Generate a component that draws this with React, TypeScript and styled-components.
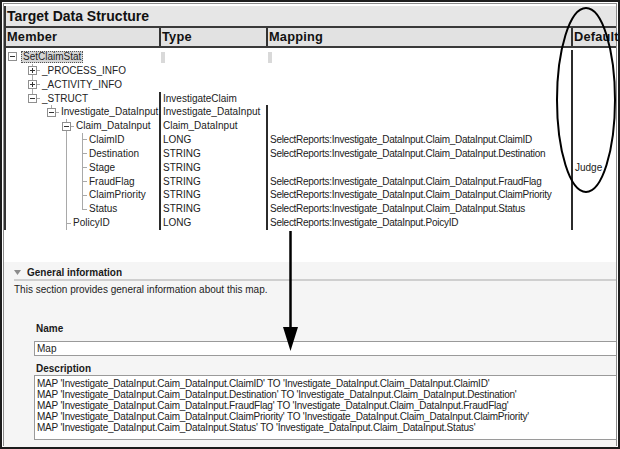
import * as React from "react";
import styled, { createGlobalStyle, css } from "styled-components";

const LINE = "#a9a9a9";
const SLOT = [20, 19, 15, 16, 16];

type TreeRow = {
  label: string;
  level: number;
  kind: "open" | "closed" | "leaf";
  vert: "none" | "full" | "top";
  guides?: number[];
  selected?: boolean;
  type?: string;
  map?: string;
  def?: string;
  mapLine?: boolean;
  stub?: boolean;
};

const MAP_PREFIX = "SelectReports:Investigate_DataInput.Claim_DataInput.";

const rows: TreeRow[] = [
  { label: "SetClaimStat", level: 0, kind: "open", vert: "none", selected: true, stub: true },
  { label: "_PROCESS_INFO", level: 1, kind: "closed", vert: "full" },
  { label: "_ACTIVITY_INFO", level: 1, kind: "closed", vert: "full" },
  { label: "_STRUCT", level: 1, kind: "open", vert: "top", type: "InvestigateClaim" },
  { label: "Investigate_DataInput", level: 2, kind: "open", vert: "top", type: "Investigate_DataInput", mapLine: true },
  { label: "Claim_DataInput", level: 3, kind: "open", vert: "full", type: "Claim_DataInput", mapLine: true },
  { label: "ClaimID", level: 4, kind: "leaf", vert: "full", guides: [3], type: "LONG", map: MAP_PREFIX + "ClaimID", mapLine: true },
  { label: "Destination", level: 4, kind: "leaf", vert: "full", guides: [3], type: "STRING", map: MAP_PREFIX + "Destination", mapLine: true },
  { label: "Stage", level: 4, kind: "leaf", vert: "full", guides: [3], type: "STRING", def: "Judge", mapLine: true },
  { label: "FraudFlag", level: 4, kind: "leaf", vert: "full", guides: [3], type: "STRING", map: MAP_PREFIX + "FraudFlag", mapLine: true },
  { label: "ClaimPriority", level: 4, kind: "leaf", vert: "full", guides: [3], type: "STRING", map: MAP_PREFIX + "ClaimPriority", mapLine: true },
  { label: "Status", level: 4, kind: "leaf", vert: "top", guides: [3], type: "STRING", map: MAP_PREFIX + "Status", mapLine: true },
  { label: "PolicyID", level: 3, kind: "leaf", vert: "full", type: "LONG", map: "SelectReports:Investigate_DataInput.PoicyID", mapLine: true },
];

const description = [
  "MAP 'Investigate_DataInput.Caim_DataInput.ClaimID' TO 'Investigate_DataInput.Claim_DataInput.ClaimID'",
  "MAP 'Investigate_DataInput.Caim_DataInput.Destination' TO 'Investigate_DataInput.Claim_DataInput.Destination'",
  "MAP 'Investigate_DataInput.Caim_DataInput.FraudFlag' TO 'Investigate_DataInput.Claim_DataInput.FraudFlag'",
  "MAP 'Investigate_DataInput.Caim_DataInput.ClaimPriority' TO 'Investigate_DataInput.Claim_DataInput.ClaimPriority'",
  "MAP 'Investigate_DataInput.Caim_DataInput.Status' TO 'Investigate_DataInput.Claim_DataInput.Status'",
];

const GlobalStyle = createGlobalStyle`
  html, body {
    margin: 0;
    padding: 0;
    background: #fff;
  }
  body {
    font-family: "Liberation Sans", Arial, sans-serif;
  }
`;

const Frame = styled.div`
  position: relative;
  width: 620px;
  height: 449px;
  box-sizing: border-box;
  border: 2px solid #1c1c1c;
  padding: 4px 2px 0 2px;
  box-shadow: inset 0 0 0 1px #fff, inset 0 0 0 2px #8c8c8c;
  display: flex;
  flex-direction: column;
  overflow: hidden;
  background: #fff;
`;

const TopPanel = styled.div`
  border-left: 2px solid #333;
  display: flex;
  flex-direction: column;
`;

const TitleBar = styled.div`
  height: 20px;
  line-height: 20px;
  padding-left: 1px;
  background: #e6e6e6;
  border-bottom: 2px solid #3a3a3a;
  font-size: 14px;
  font-weight: bold;
  color: #111;
`;

const columns = "153px 107px 305px 1fr";

const HeaderRow = styled.div`
  display: grid;
  grid-template-columns: ${columns};
  height: 18px;
  background: #e2e2e2;
  border-bottom: 2px solid #3a3a3a;
`;

const HeadCell = styled.div<{ $divider?: boolean }>`
  padding-left: 1px;
  line-height: 18px;
  font-size: 12.8px;
  font-weight: bold;
  letter-spacing: 0.2px;
  color: #111;
  white-space: nowrap;
  border-left: ${(p) => (p.$divider ? "2px solid #333" : "none")};
`;

const Body = styled.div`
  padding-top: 2px;
  display: flex;
  flex-direction: column;
`;

const Row = styled.div`
  display: grid;
  grid-template-columns: ${columns};
  height: 13.85px;
  line-height: 13.85px;
  font-size: 10px;
  color: #222;
`;

const MemberCell = styled.div`
  display: flex;
  align-items: stretch;
  padding-left: 2px;
  white-space: nowrap;
  overflow: hidden;
`;

const Cell = styled.div<{ $line: "dark" | "stub" | "none"; $tight?: boolean }>`
  white-space: nowrap;
  overflow: hidden;
  padding-left: 2px;
  letter-spacing: ${(p) => (p.$tight ? "-0.28px" : "0")};
  border-left: 2px solid ${(p) => (p.$line === "dark" ? "#2b2b2b" : "transparent")};
  ${(p) =>
    p.$line === "stub" &&
    css`
      border-left: 4px solid #d9d9d9;
      margin: 2px 0 1px 2px;
      padding-left: 0;
    `}
`;

const Slot = styled.span<{ $w: number; $guide?: boolean }>`
  flex: none;
  width: ${(p) => p.$w}px;
  ${(p) =>
    p.$guide &&
    css`
      background: linear-gradient(${LINE}, ${LINE}) no-repeat 4px 0 / 1px 100%;
    `}
`;

const vertLine = (v: "none" | "full" | "top") =>
  v === "full"
    ? `, linear-gradient(${LINE}, ${LINE}) no-repeat 4px 0 / 1px 100%`
    : v === "top"
    ? `, linear-gradient(${LINE}, ${LINE}) no-repeat 4px 0 / 1px 50%`
    : "";

const Marker = styled.span<{ $w: number; $vert: "none" | "full" | "top"; $stem: boolean }>`
  flex: none;
  width: ${(p) => p.$w}px;
  display: flex;
  align-items: center;
  background: ${(p) =>
    (p.$stem
      ? `linear-gradient(${LINE}, ${LINE}) no-repeat 4px 50% / calc(100% - 5px) 1px`
      : "none") + vertLine(p.$vert)};
`;

const Toggle = styled.svg`
  flex: none;
  display: block;
`;

const Label = styled.span<{ $selected?: boolean }>`
  padding: 0 1px;
  ${(p) =>
    p.$selected &&
    css`
      padding: 0 2px;
      margin: 1px 0;
      line-height: 11.85px;
      background: #d5d5d5;
      outline: 1px dotted #555;
      outline-offset: -1px;
    `}
`;

const BottomPanel = styled.div`
  flex: 1;
  margin-top: 32px;
  background: #f5f5f5;
  padding-left: 10px;
  display: flex;
  flex-direction: column;
  color: #222;
  font-size: 10px;
`;

const SectionHeader = styled.div`
  margin-top: 4px;
  height: 13px;
  display: flex;
  align-items: center;
  gap: 6px;
  border-bottom: 2px solid #cfcfcf;
  font-weight: bold;
  color: #1a1a1a;
  line-height: 13px;
`;

const Intro = styled.div`
  margin-top: 2px;
  line-height: 14px;
`;

const Form = styled.div`
  padding-left: 20px;
  display: flex;
  flex-direction: column;
`;

const FieldLabel = styled.div<{ $gap: number }>`
  margin-top: ${(p) => p.$gap}px;
  padding-left: 2px;
  line-height: 13px;
  font-weight: bold;
  color: #1a1a1a;
`;

const Field = styled.div<{ $h: number; $top?: number; $padTop?: number }>`
  height: ${(p) => p.$h}px;
  margin-top: ${(p) => p.$top ?? 0}px;
  box-sizing: border-box;
  background: #fff;
  border: 1px solid #9a9a9a;
  border-right: none;
  padding: ${(p) => p.$padTop ?? 1}px 2px 1px 2px;
  white-space: nowrap;
  overflow: hidden;
`;

const FieldText = styled.div<{ $lh: number; $tight?: boolean }>`
  line-height: ${(p) => p.$lh}px;
  letter-spacing: ${(p) => (p.$tight ? "-0.22px" : "0")};
`;

const Annotations = styled.svg`
  position: absolute;
  left: -2px;
  top: -2px;
  pointer-events: none;
`;

const ToggleIcon: React.FC<{ open: boolean }> = ({ open }) => (
  <Toggle width="9" height="9" viewBox="0 0 9 9">
    <rect x="0.5" y="0.5" width="8" height="8" fill="#fff" stroke="#8f8f8f" />
    <line x1="2" y1="4.5" x2="7" y2="4.5" stroke="#333" />
    {!open && <line x1="4.5" y1="2" x2="4.5" y2="7" stroke="#333" />}
  </Toggle>
);

const TreeCell: React.FC<{ row: TreeRow }> = ({ row }) => {
  const slots = [];
  for (let i = 0; i < row.level; i++) {
    slots.push(<Slot key={i} $w={SLOT[i]} $guide={row.guides?.includes(i)} />);
  }
  const isLeaf = row.kind === "leaf";
  return (
    <MemberCell>
      {slots}
      <Marker $w={isLeaf ? 10 : 13} $vert={row.vert} $stem={row.level > 0}>
        {!isLeaf && <ToggleIcon open={row.kind === "open"} />}
      </Marker>
      <Label $selected={row.selected}>{row.label}</Label>
    </MemberCell>
  );
};

export default function App() {
  return (
    <>
      <GlobalStyle />
      <Frame>
        <TopPanel>
          <TitleBar>Target Data Structure</TitleBar>
          <HeaderRow>
            <HeadCell>Member</HeadCell>
            <HeadCell $divider>Type</HeadCell>
            <HeadCell $divider>Mapping</HeadCell>
            <HeadCell $divider>Default</HeadCell>
          </HeaderRow>
          <Body>
            {rows.map((row) => (
              <Row key={row.label}>
                <TreeCell row={row} />
                <Cell $line={row.stub ? "stub" : row.type ? "dark" : "none"}>{row.type}</Cell>
                <Cell $tight $line={row.stub ? "stub" : row.mapLine ? "dark" : "none"}>
                  {row.map}
                </Cell>
                <Cell $line="dark">{row.def}</Cell>
              </Row>
            ))}
          </Body>
        </TopPanel>

        <BottomPanel>
          <SectionHeader>
            <svg width="7" height="5" viewBox="0 0 7 5">
              <polygon points="0,0 7,0 3.5,5" fill="#8c8c8c" />
            </svg>
            General information
          </SectionHeader>
          <Intro>This section provides general information about this map.</Intro>
          <Form>
            <FieldLabel $gap={25}>Name</FieldLabel>
            <Field $h={15} $top={6}>
              <FieldText $lh={12}>Map</FieldText>
            </Field>
            <FieldLabel $gap={6}>Description</FieldLabel>
            <Field $h={65} $padTop={2}>
              {description.map((line) => (
                <FieldText key={line} $lh={11} $tight>
                  {line}
                </FieldText>
              ))}
            </Field>
          </Form>
        </BottomPanel>

        <Annotations width="620" height="449" viewBox="0 0 620 449">
          <ellipse cx="586" cy="100" rx="29" ry="92" fill="none" stroke="#000" strokeWidth="2" />
          <line x1="290.5" y1="231" x2="290.5" y2="332" stroke="#000" strokeWidth="2.5" />
          <polygon points="283,327 298,327 290.5,351" fill="#000" />
        </Annotations>
      </Frame>
    </>
  );
}
